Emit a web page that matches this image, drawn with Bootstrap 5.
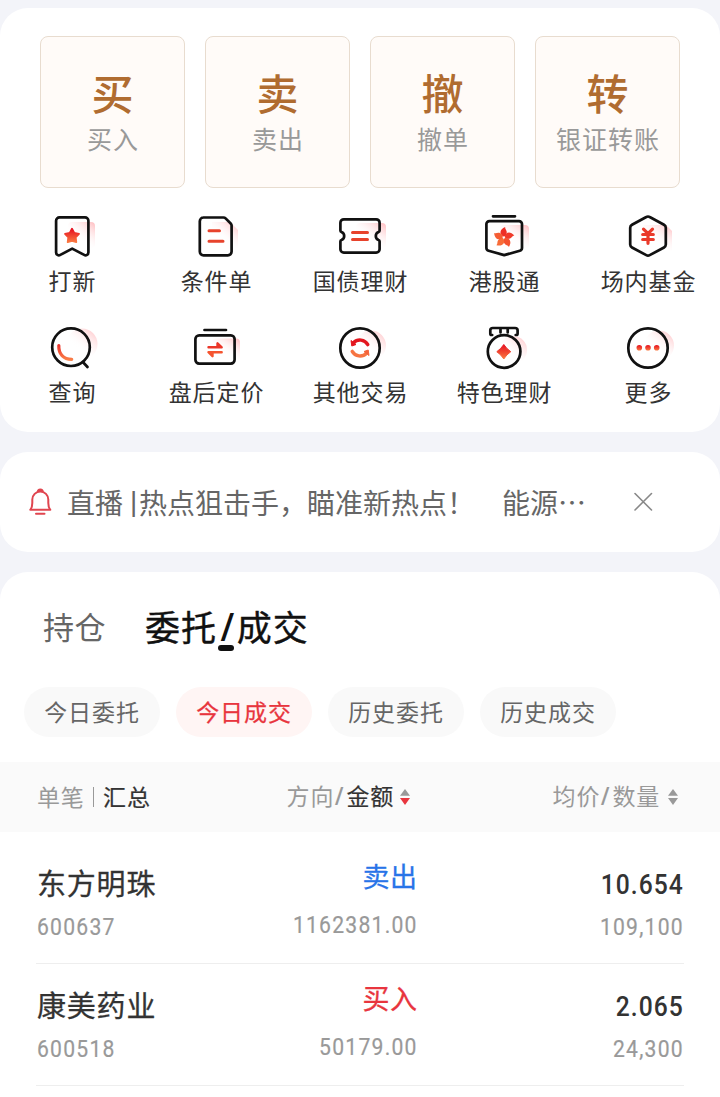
<!DOCTYPE html>
<html lang="zh-CN">
<head>
<meta charset="utf-8">
<meta name="viewport" content="width=device-width, initial-scale=1">
<title>交易</title>
<link href="https://cdn.jsdelivr.net/npm/bootstrap@5.3.0/dist/css/bootstrap.min.css" rel="stylesheet">
<style>
body{background:#f3f4f9;font-family:"Noto Sans CJK SC",sans-serif;color:#333;line-height:1;overflow:hidden;height:1097px}
.panel{background:#fff;border-radius:28px}
.trade{height:424px;margin-top:8px;padding-top:28px}
.tiles{gap:20px;padding:0 40px}
.tile{height:152px;border:1px solid #e8dccf;border-radius:8px;background:#fffbf8;padding-top:32px;color:#999;font-size:25px;letter-spacing:1px}
.tile b{font-size:42px;line-height:46px;font-weight:500;color:#b06c30;letter-spacing:0}
.tile span{line-height:30px;margin-top:8px;white-space:nowrap;margin-right:-1px}
.tools{padding-top:25px;row-gap:15px}
.tool{width:20%;height:96px;font-size:23px;letter-spacing:.9px}
.tool svg{width:48px;height:48px;overflow:visible}
.tool span{line-height:28px;margin-top:5px;margin-right:-1px}
.k{fill:none;stroke:#111;stroke-width:2.7;stroke-linejoin:round;stroke-linecap:round}
.r{fill:none;stroke:#e7432c;stroke-width:3;stroke-linecap:round}
.notice{height:100px;margin-top:20px;padding-left:28px;font-size:28px;color:#666}
.notice .msg{margin-left:15px;line-height:40px;margin-top:-1px}
.latin{font-family:"Liberation Sans",sans-serif}
.records{height:540px;margin-top:20px;border-radius:28px 28px 0 0}
.tabs{height:115px;padding:31px 0 0 43px;line-height:46px}
.tab-a{font-size:31px;color:#666;width:102px;letter-spacing:.6px}
.tab-b{font-size:35px;color:#111;-webkit-text-stroke:.4px #111;letter-spacing:.9px}
.tab-b i{font-style:normal;position:relative;display:inline-block;width:20px;text-align:center;line-height:40px}
.tab-b i span{display:inline-block;transform:scaleX(1.25);font-size:38px;letter-spacing:0;-webkit-text-stroke:0}
.tab-b i::after{content:"";position:absolute;left:1px;bottom:-3px;width:16px;height:6px;border-radius:3px;background:#111}
.pills{gap:16px;padding-left:24px}
.pill{width:136px;height:50px;border-radius:25px;background:#f9f9f9;color:#666;font-size:23px;letter-spacing:.9px;line-height:48px}
.pill.on{background:#fff5f4;color:#e8353e;-webkit-text-stroke:.25px #e8353e}
.cols{height:70px;margin-top:25px;background:#fafafa;font-size:23px;letter-spacing:.8px;color:#999;padding:0 36px 0 37px}
.cols .t{position:relative;top:-1px}
.cols .latin{margin:0 3px 0 2px;display:inline-block;transform:scaleX(1.3)}
.cols em{font-style:normal;color:#333;-webkit-text-stroke:.2px #333}
.cols svg{width:10px;height:16px}
.c1{width:150px}.c2{width:231px}.c3{width:266px}
.vbar{width:1.5px;height:20px;background:#999;margin:0 9px 0 8px}
.list{padding:10px 36px 0}
.rec{height:122px;border-bottom:1px solid #eee;padding:0 1px}
.rec .nm{font-size:29px;letter-spacing:.8px;-webkit-text-stroke:.3px #333;line-height:40px;margin-top:20px}
.rec .sd{font-size:27px;letter-spacing:.5px;-webkit-text-stroke:.3px;line-height:40px;margin-top:14px}
.num,.px{font-family:Roboto,sans-serif;transform:scaleX(.88);transform-origin:right}
.c1 .num{transform-origin:left}
.num{font-size:24px;line-height:30px;color:#999;letter-spacing:1.4px;-webkit-text-stroke:.2px #999}
.rec .c3 .num,.px{margin-right:-1.300px}
.rec .px{font-size:28px;font-weight:500;line-height:40px;margin-top:23px;letter-spacing:1.2px}
.sell{color:#2874e8}.buy{color:#e8353e}
</style>
</head>
<body>
<svg width="0" height="0" class="position-absolute">
<defs>
<linearGradient id="g" x1="0" y1="0" x2="0" y2="1"><stop offset="0" stop-color="#e60f20"/><stop offset="1" stop-color="#fa7a42"/></linearGradient>
<linearGradient id="gu" gradientUnits="userSpaceOnUse" x1="0" y1="14" x2="0" y2="36"><stop offset="0" stop-color="#e60f20"/><stop offset="1" stop-color="#fa8048"/></linearGradient>
<linearGradient id="p" x1="1" y1=".1" x2=".4" y2=".8"><stop offset="0" stop-color="#ffc5c8"/><stop offset=".9" stop-color="#fff" stop-opacity="0"/></linearGradient>
</defs>
</svg>

<section class="panel trade">
  <div class="d-flex tiles">
    <div class="tile flex-fill w-25 d-flex flex-column align-items-center"><b>买</b><span>买入</span></div>
    <div class="tile flex-fill w-25 d-flex flex-column align-items-center"><b>卖</b><span>卖出</span></div>
    <div class="tile flex-fill w-25 d-flex flex-column align-items-center"><b>撤</b><span>撤单</span></div>
    <div class="tile flex-fill w-25 d-flex flex-column align-items-center"><b>转</b><span>银证转账</span></div>
  </div>
  <div class="d-flex flex-wrap tools">
    <div class="tool d-flex flex-column align-items-center">
      <svg viewBox="0 0 48 48"><rect x="20" y="9" width="27" height="26" rx="4" fill="url(#p)"/><path class="k" d="M11.500 4.400H37a3.400 3.400 0 0 1 3.400 3.400V39.500a2.800 2.800 0 0 1-4.200 2.400L24.200 35.600 12.300 41.900A2.800 2.800 0 0 1 8.100 39.500V7.800A3.400 3.400 0 0 1 11.500 4.400Z"/><path fill="url(#g)" stroke="url(#g)" stroke-width="1.800" stroke-linejoin="round" d="M24 15.800l2.300 4.200 4.700.9-3.300 3.400.6 4.900-4.300-1.400-4.300 1.400.6-4.900-3.300-3.400 4.700-.9z"/></svg><span>打新</span></div>
    <div class="tool d-flex flex-column align-items-center">
      <svg viewBox="0 0 48 48"><path d="M20 9H38L46 17V35H20Z" fill="url(#p)"/><path class="k" d="M11.400 4.500H31.500a3 3 0 0 1 2.100.9L38.700 10.500a3 3 0 0 1 .9 2.100V38.600a3.700 3.700 0 0 1-3.700 3.700H11.500a3.700 3.700 0 0 1-3.700-3.700V8.200a3.700 3.700 0 0 1 3.700-3.700Z"/><path class="r" d="M17 17.700H27.500M17 28.300H31"/></svg><span>条件单</span></div>
    <div class="tool d-flex flex-column align-items-center">
      <svg viewBox="0 0 48 48"><rect x="20" y="10" width="30" height="25" rx="4" fill="url(#p)"/><path class="k" d="M7.800 6.300H40.200a3.400 3.400 0 0 1 3.400 3.400V17.500a1.500 1.500 0 0 1-1 1.400 4.400 4.400 0 0 0 0 8.200 1.500 1.500 0 0 1 1 1.400V36.200a3.400 3.400 0 0 1-3.400 3.400H7.800a3.400 3.400 0 0 1-3.400-3.400V28.500a1.500 1.500 0 0 1 1-1.400 4.400 4.400 0 0 0 0-8.200 1.500 1.500 0 0 1-1-1.400V9.700A3.400 3.400 0 0 1 7.800 6.300Z"/><path class="r" d="M16.500 19.400H31.500M16.500 26.400H31.500"/></svg><span>国债理财</span></div>
    <div class="tool d-flex flex-column align-items-center">
      <svg viewBox="0 0 48 48"><rect x="20" y="12" width="29" height="24" rx="4" fill="url(#p)"/><path class="k" d="M13 3.300H35M9.500 8.100H39a3 3 0 0 1 3 3V35a3 3 0 0 1-2.200 2.800L24.200 42.100 8.600 37.800A3 3 0 0 1 6.400 35V11.100a3 3 0 0 1 3-3Z"/>
      <g transform="translate(23.800 24.500)"><path fill="#ee2f26" d="M-.2-1C-4.600-3-4.600-8.200 1.400-10.600 1-8.300 3.300-7.600 2.900-4.600 2.600-2.600 1.300-1.200-.2-1Z"/><path fill="#f03a2a" transform="rotate(72)" d="M-.2-1C-4.600-3-4.600-8.200 1.400-10.600 1-8.300 3.300-7.600 2.900-4.600 2.600-2.600 1.300-1.200-.2-1Z"/><path fill="#f4522f" transform="rotate(144)" d="M-.2-1C-4.600-3-4.600-8.200 1.400-10.600 1-8.300 3.300-7.600 2.900-4.600 2.600-2.600 1.300-1.200-.2-1Z"/><path fill="#f86c38" transform="rotate(216)" d="M-.2-1C-4.600-3-4.600-8.200 1.400-10.600 1-8.300 3.300-7.600 2.900-4.600 2.600-2.600 1.300-1.200-.2-1Z"/><path fill="#f55d34" transform="rotate(288)" d="M-.2-1C-4.600-3-4.600-8.200 1.400-10.600 1-8.300 3.300-7.600 2.900-4.600 2.600-2.600 1.300-1.200-.2-1Z"/></g></svg><span>港股通</span></div>
    <div class="tool d-flex flex-column align-items-center">
      <svg viewBox="0 0 48 48"><path d="M20 12H42L48 18V38L20 30Z" fill="url(#p)"/><path class="k" d="M22.300 4Q24 3 25.700 4L40 11.700Q41.800 12.700 41.800 14.700V31.600Q41.800 33.500 40 34.500L25.700 42.100Q24 43 22.300 42.100L8 34.500Q6.200 33.500 6.200 31.600V14.700Q6.200 12.700 8 11.700Z"/><path fill="none" stroke="#ea3a2b" stroke-width="3.200" stroke-linecap="round" stroke-linejoin="round" d="M19.500 16.200L24 20.700 28.500 16.200M24 20.700V30.300M18.700 21.500H29.300M18.700 26.500H29.300"/></svg><span>场内基金</span></div>
    <div class="tool d-flex flex-column align-items-center">
      <svg viewBox="0 0 48 48"><circle cx="34" cy="20" r="15.500" fill="url(#p)"/><circle cx="23" cy="23.200" r="18.800" class="k"/><path class="k" d="M35.300 38.500L39.500 43"/><path fill="none" stroke="url(#gu)" stroke-width="3.200" stroke-linecap="round" d="M10.800 21.500C10.500 30 15.500 35.200 23.700 35.300"/></svg><span>查询</span></div>
    <div class="tool d-flex flex-column align-items-center">
      <svg viewBox="0 0 48 48"><rect x="20" y="14.500" width="28" height="22" rx="4" fill="url(#p)"/><path class="k" d="M12.500 6H34"/><rect class="k" x="3.400" y="11.300" width="39.200" height="28.300" rx="3.800"/><path fill="#eb3528" stroke="#eb3528" stroke-width="2.400" stroke-linecap="round" stroke-linejoin="round" d="M16.500 23.300H29.700L25.500 19.300V23.300"/><path fill="#f5542f" stroke="#f5542f" stroke-width="2.400" stroke-linecap="round" stroke-linejoin="round" d="M29.700 28.200H16.500L20.500 32.200V28.200"/></svg><span>盘后定价</span></div>
    <div class="tool d-flex flex-column align-items-center">
      <svg viewBox="0 0 48 48"><circle cx="35" cy="21.500" r="15" fill="url(#p)"/><circle cx="24" cy="24" r="19.700" class="k"/><path fill="none" stroke="#e3171f" stroke-width="3.400" stroke-linecap="round" d="M17.500 18.800A9 9 0 0 1 31.800 20.600"/><path fill="#e3171f" stroke="#e3171f" stroke-linejoin="round" d="M15 16.500L20 20.500 15.800 22Z"/><path fill="none" stroke="#f67442" stroke-width="3.400" stroke-linecap="round" d="M30.500 29.200A9 9 0 0 1 16.200 27.400"/><path fill="#f46339" stroke="#f46339" stroke-linejoin="round" d="M33 31.500L28 27.500 32.200 26Z"/></svg><span>其他交易</span></div>
    <div class="tool d-flex flex-column align-items-center">
      <svg viewBox="0 0 48 48"><circle cx="33" cy="26" r="14" fill="url(#p)"/><circle cx="24.100" cy="27.500" r="16.300" class="k"/><path class="k" d="M12.200 11H11.600Q10.300 11 10.300 9.500V6.300Q10.300 4 12.800 4H35Q37.600 4 37.600 6.300V9.500Q37.600 11 36.300 11H35.700M20.500 4.500V8.500M27.700 4.500V8.500"/><path fill="url(#g)" stroke="url(#g)" stroke-linejoin="round" d="M23.800 20.500Q26.500 24.800 30.800 27.700 26.500 30.500 23.800 35 21 30.500 16.800 27.700 21 24.800 23.800 20.500Z"/></svg><span>特色理财</span></div>
    <div class="tool d-flex flex-column align-items-center">
      <svg viewBox="0 0 48 48"><circle cx="35" cy="21.500" r="15" fill="url(#p)"/><circle cx="24" cy="24" r="19.700" class="k"/><g fill="url(#g)"><circle cx="15.300" cy="23.800" r="2.800"/><circle cx="24" cy="23.800" r="2.800"/><circle cx="32.700" cy="23.800" r="2.800"/></g></svg><span>更多</span></div>
  </div>
</section>

<section class="panel notice d-flex align-items-center">
  <svg width="24" height="30" viewBox="0 0 24 30" fill="none" stroke="#e0454f" stroke-width="2" stroke-linecap="round" stroke-linejoin="round"><path d="M2.300 22.800H22.300M2.300 22.800C3.800 21 4.300 19 4.300 16V12.500A8 8 0 0 1 20.300 12.500V16C20.300 19 20.800 21 22.300 22.800M9.800 5Q9.800 2.500 12.300 2.500T14.800 5M8 26.700H16.500"/></svg>
  <div class="msg d-flex"><span style="width:63px">直播</span><span class="latin" style="width:9px">|</span><span style="width:363px">热点狙击手，瞄准新热点！</span><span>能源⋯</span></div>
  <svg style="margin-left:47px" width="20" height="20" viewBox="0 0 20 20" stroke="#888" stroke-width="1.600" stroke-linecap="round"><path d="M2 1.500L18.500 18M18.500 1.500L2 18"/></svg>
</section>

<section class="panel records">
  <div class="tabs d-flex"><span class="tab-a">持仓</span><span class="tab-b">委托<i><span class="latin">/</span></i>成交</span></div>
  <div class="d-flex pills text-center">
    <span class="pill">今日委托</span><span class="pill on">今日成交</span><span class="pill">历史委托</span><span class="pill">历史成交</span>
  </div>
  <div class="cols d-flex align-items-center">
    <div class="c1 d-flex align-items-center"><span class="t">单笔</span><span class="vbar"></span><em class="t">汇总</em></div>
    <div class="c2 d-flex align-items-center justify-content-end"><span class="t">方向<span class="latin">/</span><em>金额</em></span><svg style="margin:0 8px 0 6px" viewBox="0 0 10 16"><path fill="#999" d="M5 0L10 6.700H0Z"/><path fill="#e8353e" d="M5 16L0 9H10Z"/></svg></div>
    <div class="c3 d-flex align-items-center justify-content-end"><span class="t">均价<span class="latin">/</span>数量</span><svg class="ms-2" style="margin-right:6px" viewBox="0 0 10 16"><path fill="#999" d="M5 0L10 6.700H0ZM5 16L0 9H10Z"/></svg></div>
  </div>
  <div class="list">
    <div class="rec d-flex">
      <div class="c1"><div class="nm">东方明珠</div><div class="num" style="margin-top:10px">600637</div></div>
      <div class="c2 text-end"><div class="sd sell">卖出</div><div class="num" style="margin-top:14px">1162381.00</div></div>
      <div class="c3 text-end"><div class="px">10.654</div><div class="num" style="margin-top:7px">109,100</div></div>
    </div>
    <div class="rec d-flex">
      <div class="c1"><div class="nm">康美药业</div><div class="num" style="margin-top:10px">600518</div></div>
      <div class="c2 text-end"><div class="sd buy">买入</div><div class="num" style="margin-top:14px">50179.00</div></div>
      <div class="c3 text-end"><div class="px">2.065</div><div class="num" style="margin-top:7px">24,300</div></div>
    </div>
  </div>
</section>
<script src="https://cdn.jsdelivr.net/npm/bootstrap@5.3.0/dist/js/bootstrap.bundle.min.js"></script>
</body>
</html>
